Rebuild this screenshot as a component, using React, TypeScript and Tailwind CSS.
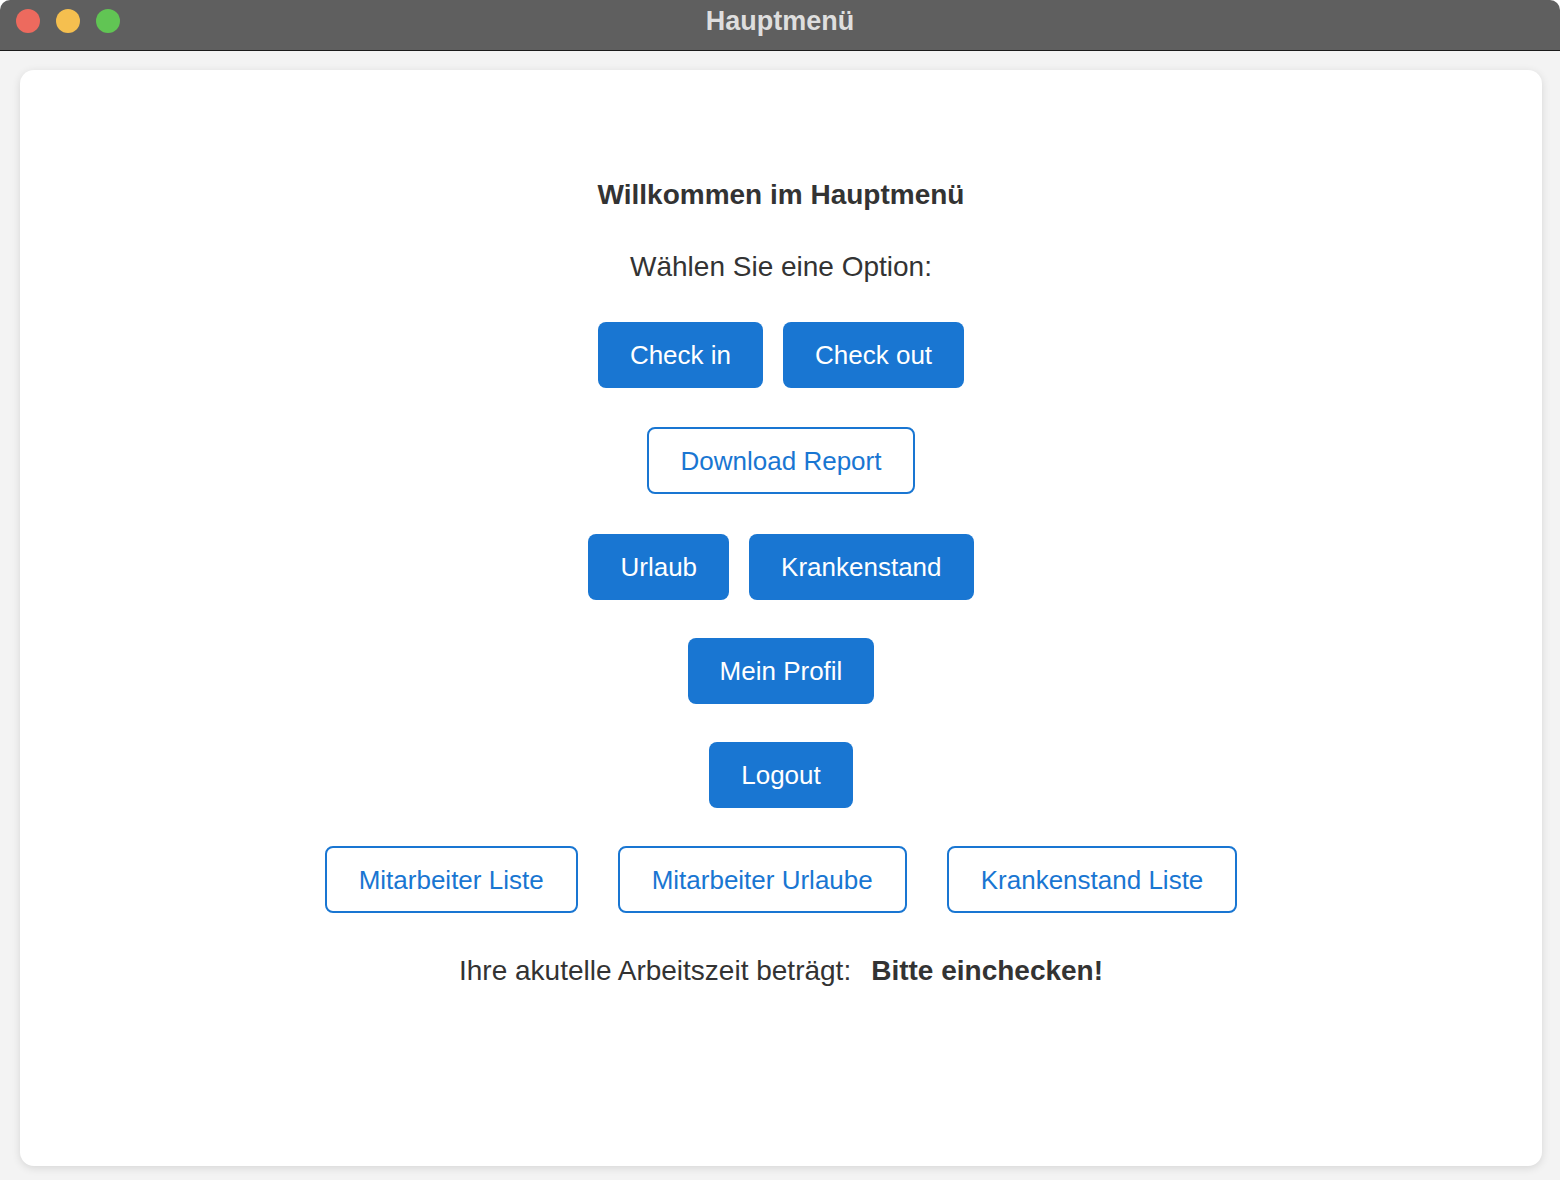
import React from "react";

const font = { fontFamily: '"Liberation Sans", Arial, sans-serif' };

function FilledButton({ label }: { label: string }) {
  return (
    <button className="h-[66px] px-8 rounded-[8px] bg-[#1976d2] text-white text-[26px] leading-none">
      {label}
    </button>
  );
}

function OutlineButton({ label }: { label: string }) {
  return (
    <button className="h-[67px] px-8 rounded-[8px] border-2 border-[#1976d2] bg-white text-[#1976d2] text-[26px] leading-none">
      {label}
    </button>
  );
}

export default function App() {
  return (
    <div className="w-[1560px] h-[1180px] bg-white overflow-hidden" style={font}>
      <div className="flex flex-col h-full rounded-t-[10px] overflow-hidden">
        {/* Title bar */}
        <div className="relative h-[51px] shrink-0 bg-[#5f5f5f] border-b border-[#1a1a1a] flex items-center justify-center">
          <div className="absolute left-4 top-[9px] flex gap-4">
            <span className="w-6 h-6 rounded-full bg-[#ed6a5e]" />
            <span className="w-6 h-6 rounded-full bg-[#f5bf4f]" />
            <span className="w-6 h-6 rounded-full bg-[#61c554]" />
          </div>
          <span className="text-[27px] font-bold text-[#dedede] -mt-[8px]">Hauptmenü</span>
        </div>

        {/* Content */}
        <div className="flex-1 bg-[#f3f3f3] pt-[19px] pl-[20px] pr-[18px] pb-[14px] flex">
          <div className="flex-1 bg-white rounded-[14px] shadow-[0_2px_8px_rgba(0,0,0,0.12)] flex flex-col items-center pt-[109px] text-[#333]">
            <h1 className="text-[28px] leading-[32px] font-bold">Willkommen im Hauptmenü</h1>
            <p className="mt-[40px] text-[28px] leading-[32px]">Wählen Sie eine Option:</p>

            <div className="mt-[39px] flex gap-5">
              <FilledButton label="Check in" />
              <FilledButton label="Check out" />
            </div>

            <div className="mt-[39px]">
              <OutlineButton label="Download Report" />
            </div>

            <div className="mt-[40px] flex gap-5">
              <FilledButton label="Urlaub" />
              <FilledButton label="Krankenstand" />
            </div>

            <div className="mt-[38px]">
              <FilledButton label="Mein Profil" />
            </div>

            <div className="mt-[38px]">
              <FilledButton label="Logout" />
            </div>

            <div className="mt-[38px] flex gap-10">
              <OutlineButton label="Mitarbeiter Liste" />
              <OutlineButton label="Mitarbeiter Urlaube" />
              <OutlineButton label="Krankenstand Liste" />
            </div>

            <div className="mt-[42px] flex items-center gap-[20px] text-[28px] leading-[32px]">
              <span>Ihre akutelle Arbeitszeit beträgt:</span>
              <span className="font-bold">Bitte einchecken!</span>
            </div>
          </div>
        </div>
      </div>
    </div>
  );
}
